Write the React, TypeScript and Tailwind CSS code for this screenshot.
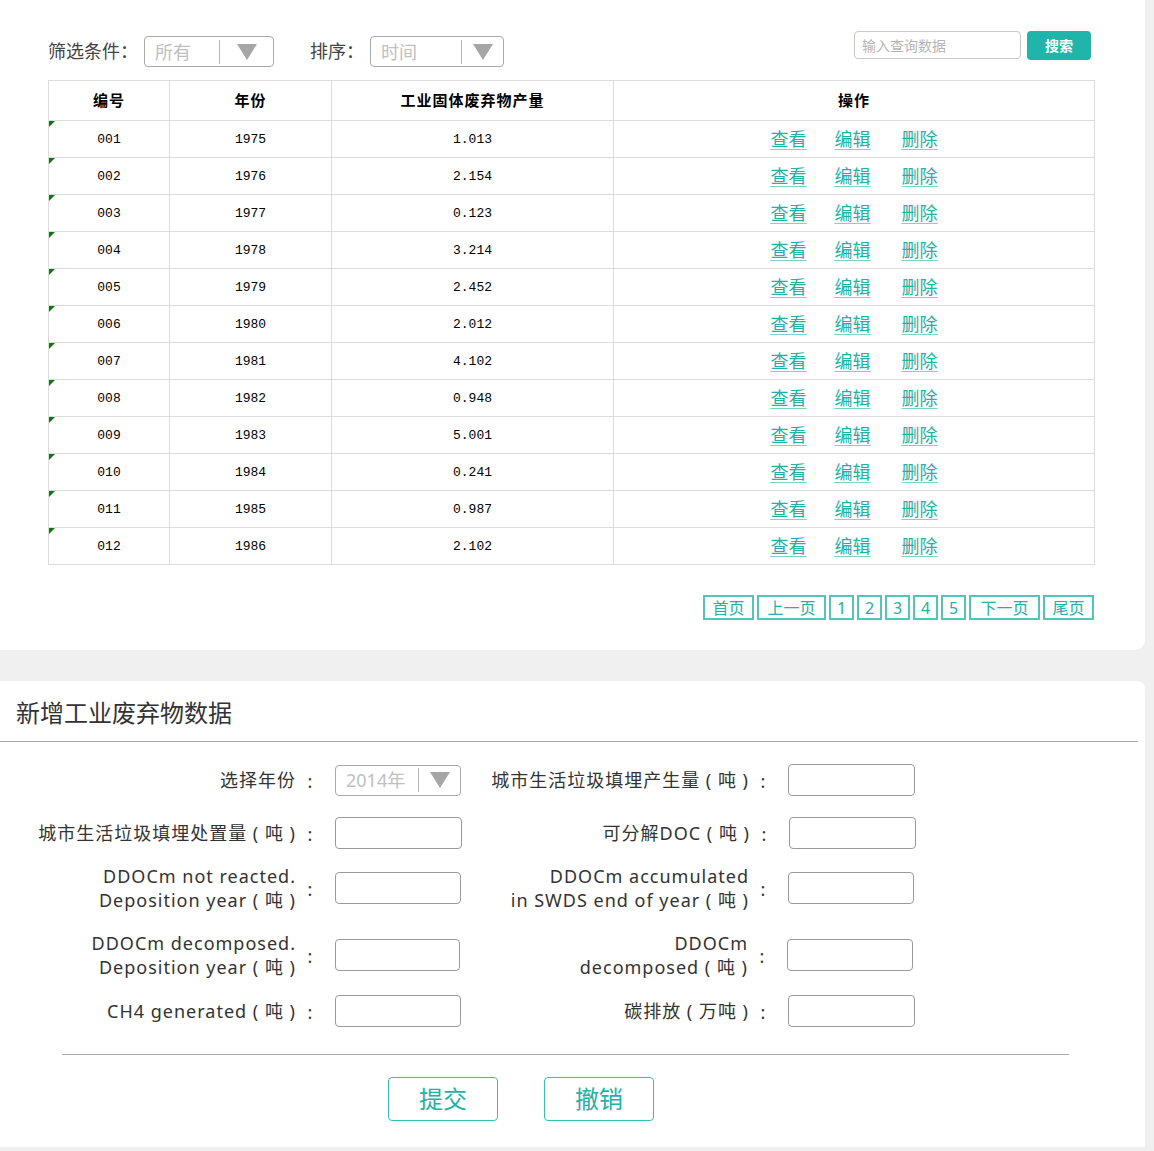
import React from 'react';

const rows = [
  ['001', '1975', '1.013'],
  ['002', '1976', '2.154'],
  ['003', '1977', '0.123'],
  ['004', '1978', '3.214'],
  ['005', '1979', '2.452'],
  ['006', '1980', '2.012'],
  ['007', '1981', '4.102'],
  ['008', '1982', '0.948'],
  ['009', '1983', '5.001'],
  ['010', '1984', '0.241'],
  ['011', '1985', '0.987'],
  ['012', '1986', '2.102'],
];

const cjk = { fontFamily: '"Noto Sans", "Noto Sans CJK SC", sans-serif' };
const mono = { fontFamily: '"Liberation Mono", monospace' };

const Triangle = () => (
  <svg width="20" height="16" viewBox="0 0 20 16" className="block">
    <polygon points="0,0 20,0 10,16" fill="#a6a6a6" />
  </svg>
);

const FakeSelect: React.FC<{ value: string; width: string; textWidth: string }> = ({ value, width, textWidth }) => (
  <div className={`flex items-center h-[31px] border border-[#a9a9a9] rounded-[4px] ${width}`}>
    <div className={`pl-[10px] text-[18px] text-[#c0c0c0] leading-none ${textWidth}`}>{value}</div>
    <div className="h-[24px] border-l border-[#b5b5b5]" />
    <div className="flex-1 flex justify-center">
      <Triangle />
    </div>
  </div>
);

const Input: React.FC<{ w?: string }> = ({ w = 'w-[127px]' }) => (
  <div className={`h-[32px] border border-[#9a9a9a] rounded-[4px] bg-white ${w}`} />
);

const Label: React.FC<{ children: React.ReactNode; w: string }> = ({ children, w }) => (
  <div className={`text-right text-[18px] leading-[24px] text-[#333] tracking-[1px] whitespace-pre ${w}`}>{children}</div>
);

const Colon = () => <div className="w-[28px] pt-[3px] text-center text-[18px] text-[#333]">:</div>;

const FormRow: React.FC<{
  left: React.ReactNode;
  leftField: React.ReactNode;
  right: React.ReactNode;
  rightField?: React.ReactNode;
  className?: string;
}> = ({ left, leftField, right, rightField, className = '' }) => (
  <div className={`flex items-center ${className}`}>
    <Label w="w-[296px]">{left}</Label>
    <Colon />
    <div className="ml-[11px]">{leftField}</div>
    <Label w="w-[288px]">{right}</Label>
    <Colon />
    <div className="ml-[11px]">{rightField ?? <Input />}</div>
  </div>
);

const pages = [
  { t: '首页', w: 'w-[51px]' },
  { t: '上一页', w: 'w-[69px]' },
  { t: '1', w: 'w-[25px]' },
  { t: '2', w: 'w-[25px]' },
  { t: '3', w: 'w-[25px]' },
  { t: '4', w: 'w-[25px]' },
  { t: '5', w: 'w-[25px]' },
  { t: '下一页', w: 'w-[71px]' },
  { t: '尾页', w: 'w-[51px]' },
];

export default function App() {
  return (
    <div className="min-h-[1151px] w-full bg-[#f0f0f0]" style={cjk}>
      {/* List panel */}
      <div className="w-[1145px] h-[650px] bg-white rounded-br-[10px] pt-[31px]">
        <div className="flex justify-between pl-[48px] pr-[54px]">
          <div className="flex items-center mt-[5px] h-[31px]">
            <span className="text-[18px] text-[#444] mr-[6px]">筛选条件：</span>
            <FakeSelect value="所有" width="w-[130px]" textWidth="w-[74px]" />
            <span className="text-[18px] text-[#444] ml-[36px] mr-[6px]">排序：</span>
            <FakeSelect value="时间" width="w-[134px]" textWidth="w-[90px]" />
          </div>
          <div className="flex items-start">
            <div className="w-[167px] h-[28px] border border-[#c8c8c8] rounded-[4px] flex items-center pl-[7px] text-[14px] text-[#b5b5b5]">
              输入查询数据
            </div>
            <button className="ml-[6px] w-[64px] h-[29px] bg-[#20b5aa] rounded-[4px] text-white text-[14px] font-bold">
              搜索
            </button>
          </div>
        </div>

        <table className="ml-[48px] mt-[13px] w-[1046px] border-collapse border border-[#dcdcdc] table-fixed">
          <colgroup>
            <col className="w-[121px]" />
            <col className="w-[162px]" />
            <col className="w-[282px]" />
            <col className="w-[481px]" />
          </colgroup>
          <thead>
            <tr className="h-[40px]">
              {['编号', '年份', '工业固体废弃物产量', '操作'].map((h) => (
                <th key={h} className="border border-[#dcdcdc] text-[15px] font-bold text-black tracking-[1px]">
                  {h}
                </th>
              ))}
            </tr>
          </thead>
          <tbody>
            {rows.map(([id, year, val]) => (
              <tr key={id} className="h-[37px]">
                <td className="relative border border-[#dcdcdc] text-center text-[13px] text-black pt-[2px]" style={mono}>
                  <svg width="6" height="6" viewBox="0 0 6 6" className="absolute left-0 top-0">
                    <polygon points="0,0 6,0 0,6" fill="#0a7a0a" />
                  </svg>
                  {id}
                </td>
                <td className="border border-[#dcdcdc] text-center text-[13px] text-black pt-[2px]" style={mono}>
                  {year}
                </td>
                <td className="border border-[#dcdcdc] text-center text-[13px] text-black pt-[2px]" style={mono}>
                  {val}
                </td>
                <td className="border border-[#dcdcdc]">
                  <div className="flex justify-center gap-[28px] text-[18px] text-[#22b1a5] underline underline-offset-[3px] decoration-[#7fd2ca]">
                    <a>查看</a>
                    <a>编辑</a>
                    <a className="ml-[3px]">删除</a>
                  </div>
                </td>
              </tr>
            ))}
          </tbody>
        </table>

        <div className="flex justify-end gap-[3px] w-[1094px] mt-[30px]">
          {pages.map((p) => (
            <div
              key={p.t}
              className={`${p.w} h-[25px] border-2 border-[#52c4ba] flex items-center justify-center text-[16px] text-[#22b1a5] leading-none`}
            >
              {p.t}
            </div>
          ))}
        </div>
      </div>

      {/* Add form panel */}
      <div className="w-[1145px] h-[466px] mt-[31px] bg-white rounded-tr-[8px]">
        <div className="w-[1138px] h-[61px] border-b border-[#a8a8a8] pl-[16px] pt-[16px]">
          <h2 className="text-[24px] leading-[32px] text-[#333]">新增工业废弃物数据</h2>
        </div>

        <div className="pt-[22px]">
          <FormRow
            left="选择年份"
            leftField={<FakeSelect value="2014年" width="w-[126px]" textWidth="w-[82px]" />}
            right="城市生活垃圾填埋产生量 ( 吨 )"
          />
          <FormRow className="mt-[21px]" left="城市生活垃圾填埋处置量 ( 吨 )" leftField={<Input />} right="可分解DOC ( 吨 )" />
          <FormRow
            className="mt-[15px]"
            left={
              <>
                DDOCm not reacted.
                <br />
                Deposition year ( 吨 )
              </>
            }
            leftField={<Input w="w-[126px]" />}
            right={
              <>
                DDOCm accumulated
                <br />
                in SWDS end of year ( 吨 )
              </>
            }
            rightField={<Input w="w-[126px]" />}
          />
          <FormRow
            className="mt-[19px]"
            left={
              <>
                DDOCm decomposed.
                <br />
                Deposition year ( 吨 )
              </>
            }
            leftField={<Input w="w-[125px]" />}
            right={
              <>
                DDOCm
                <br />
                decomposed ( 吨 )
              </>
            }
            rightField={<Input w="w-[126px]" />}
          />
          <FormRow className="mt-[16px]" left="CH4 generated ( 吨 )" leftField={<Input w="w-[126px]" />} right="碳排放 ( 万吨 )" />
        </div>

        <div className="ml-[62px] w-[1007px] mt-[27px] border-t border-[#aaa]" />

        <div className="flex gap-[46px] pl-[388px] mt-[22px]">
          <button className="w-[110px] h-[44px] border border-[#36c0b4] rounded-[4px] text-[24px] text-[#22b1a5]">提交</button>
          <button className="w-[110px] h-[44px] border border-[#36c0b4] rounded-[4px] text-[24px] text-[#22b1a5]">撤销</button>
        </div>
      </div>
    </div>
  );
}
